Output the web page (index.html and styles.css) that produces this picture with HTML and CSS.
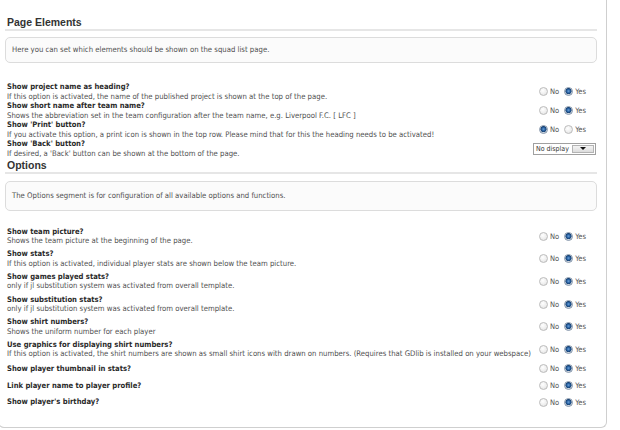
FILE: index.html
```html
<!DOCTYPE html>
<html lang="en">
<head>
  <meta charset="UTF-8">
  <title>Squad list settings</title>
  <link rel="stylesheet" href="styles.css">
</head>
<body>
  <div class="panel">
    <h2>Page Elements</h2>
    <div class="info">Here you can set which elements should be shown on the squad list page.</div>

    <div class="rows">
      <div class="row">
        <div class="text">
          <div class="title">Show project name as heading?</div>
          <div class="desc">If this option is activated, the name of the published project is shown at the top of the page.</div>
        </div>
        <div class="choice">
          <label><input type="radio" name="p1"> No</label>
          <label><input type="radio" name="p1" checked> Yes</label>
        </div>
      </div>
      <div class="row">
        <div class="text">
          <div class="title">Show short name after team name?</div>
          <div class="desc">Shows the abbreviation set in the team configuration after the team name, e.g. Liverpool F.C. [ LFC ]</div>
        </div>
        <div class="choice">
          <label><input type="radio" name="p2"> No</label>
          <label><input type="radio" name="p2" checked> Yes</label>
        </div>
      </div>
      <div class="row">
        <div class="text">
          <div class="title">Show 'Print' button?</div>
          <div class="desc">If you activate this option, a print icon is shown in the top row. Please mind that for this the heading needs to be activated!</div>
        </div>
        <div class="choice">
          <label><input type="radio" name="p3" checked> No</label>
          <label><input type="radio" name="p3"> Yes</label>
        </div>
      </div>
      <div class="row">
        <div class="text">
          <div class="title">Show 'Back' button?</div>
          <div class="desc">If desired, a 'Back' button can be shown at the bottom of the page.</div>
        </div>
        <div class="select">
          <span class="value">No display</span>
          <span class="drop"><i class="arrow"></i></span>
        </div>
      </div>
    </div>

    <h2 class="next">Options</h2>
    <div class="info tall">The Options segment is for configuration of all available options and functions.</div>

    <div class="rows loose">
      <div class="row">
        <div class="text">
          <div class="title">Show team picture?</div>
          <div class="desc">Shows the team picture at the beginning of the page.</div>
        </div>
        <div class="choice">
          <label><input type="radio" name="o1"> No</label>
          <label><input type="radio" name="o1" checked> Yes</label>
        </div>
      </div>
      <div class="row">
        <div class="text">
          <div class="title">Show stats?</div>
          <div class="desc">If this option is activated, individual player stats are shown below the team picture.</div>
        </div>
        <div class="choice">
          <label><input type="radio" name="o2"> No</label>
          <label><input type="radio" name="o2" checked> Yes</label>
        </div>
      </div>
      <div class="row">
        <div class="text">
          <div class="title">Show games played stats?</div>
          <div class="desc">only if jl substitution system was activated from overall template.</div>
        </div>
        <div class="choice">
          <label><input type="radio" name="o3"> No</label>
          <label><input type="radio" name="o3" checked> Yes</label>
        </div>
      </div>
      <div class="row">
        <div class="text">
          <div class="title">Show substitution stats?</div>
          <div class="desc">only if jl substitution system was activated from overall template.</div>
        </div>
        <div class="choice">
          <label><input type="radio" name="o4"> No</label>
          <label><input type="radio" name="o4" checked> Yes</label>
        </div>
      </div>
      <div class="row">
        <div class="text">
          <div class="title">Show shirt numbers?</div>
          <div class="desc">Shows the uniform number for each player</div>
        </div>
        <div class="choice">
          <label><input type="radio" name="o5"> No</label>
          <label><input type="radio" name="o5" checked> Yes</label>
        </div>
      </div>
      <div class="row">
        <div class="text">
          <div class="title">Use graphics for displaying shirt numbers?</div>
          <div class="desc">If this option is activated, the shirt numbers are shown as small shirt icons with drawn on numbers. (Requires that GDlib is installed on your webspace)</div>
        </div>
        <div class="choice">
          <label><input type="radio" name="o6"> No</label>
          <label><input type="radio" name="o6" checked> Yes</label>
        </div>
      </div>
      <div class="row">
        <div class="text">
          <div class="title">Show player thumbnail in stats?</div>
        </div>
        <div class="choice">
          <label><input type="radio" name="o7"> No</label>
          <label><input type="radio" name="o7" checked> Yes</label>
        </div>
      </div>
      <div class="row">
        <div class="text">
          <div class="title">Link player name to player profile?</div>
        </div>
        <div class="choice">
          <label><input type="radio" name="o8"> No</label>
          <label><input type="radio" name="o8" checked> Yes</label>
        </div>
      </div>
      <div class="row">
        <div class="text">
          <div class="title">Show player's birthday?</div>
        </div>
        <div class="choice">
          <label><input type="radio" name="o9"> No</label>
          <label><input type="radio" name="o9" checked> Yes</label>
        </div>
      </div>
    </div>
  </div>
</body>
</html>
```

FILE: styles.css
```css
* {
  box-sizing: border-box;
}
body {
  margin: 0;
  background: #fff;
  font-family: "DejaVu Sans Condensed", "DejaVu Sans", sans-serif;
  color: #505050;
}
.panel {
  width: 609px;
  margin-left: -2px;
  border: 1px solid #cfcfcf;
  border-top: none;
  border-radius: 0 0 6px 6px;
  padding: 16px 9px 17px 6px;
}
h2 {
  margin: 0;
  padding: 0 0 1px 2px;
  font: bold 10.5px/12px "Liberation Sans", Arial, sans-serif;
  color: #333;
  border-bottom: 2px solid #e6e6e6;
}
h2.next {
  margin-top: 1px;
}
.info {
  margin-top: 6px;
  height: 26px;
  padding: 0 6px;
  border: 1px solid #dcdcdc;
  border-radius: 5px;
  background: #fbfbfb;
  font-size: 7.7px;
  line-height: 24px;
}
.info.tall {
  margin-top: 7px;
  height: 30px;
  line-height: 28px;
}
.rows {
  margin-top: 19px;
}
.rows.loose {
  margin-top: 14px;
}
.row {
  display: flex;
  align-items: center;
  justify-content: space-between;
  padding-left: 2px;
}
.rows.loose .row {
  padding-top: 1.8px;
  padding-bottom: 1.8px;
}
.title {
  font-weight: bold;
  font-size: 7.6px;
  line-height: 9.5px;
  color: #2a2a2a;
}
.desc {
  font-size: 7.7px;
  line-height: 9.5px;
}
.choice {
  display: flex;
  align-items: center;
  margin-right: 11px;
  font-size: 7.5px;
  color: #555;
}
.choice label {
  display: flex;
  align-items: center;
  height: 13px;
}
.choice label + label {
  margin-left: 5px;
}
.choice input {
  appearance: none;
  width: 9px;
  height: 9px;
  margin: 0 2px 0 0;
  border: 1px solid #bcbcbc;
  border-radius: 50%;
  background: radial-gradient(circle at 40% 35%, #fff 0, #ededed 60%, #d8d8d8 100%);
}
.choice input:checked {
  border-color: #8596ab;
  background: radial-gradient(circle at 50% 45%, #6aa0d8 0, #245c9c 35%, #173f6e 55%, #c9d3de 62%, #f2f2f2 100%);
}
.select {
  display: flex;
  height: 12px;
  width: 63px;
  margin-right: 1px;
  border: 1px solid #a0a0a0;
  background: #fff;
  font-size: 7px;
  color: #333;
}
.select .value {
  flex: 1;
  padding-left: 2px;
  line-height: 10px;
}
.select .drop {
  width: 22px;
  display: flex;
  align-items: center;
  justify-content: center;
  margin: 1px;
  border: 1px solid #b4b4b4;
  background: linear-gradient(#f4f4f4, #dcdcdc);
}
.arrow {
  width: 0;
  height: 0;
  border-left: 3px solid transparent;
  border-right: 3px solid transparent;
  border-top: 3px solid #111;
}
```
